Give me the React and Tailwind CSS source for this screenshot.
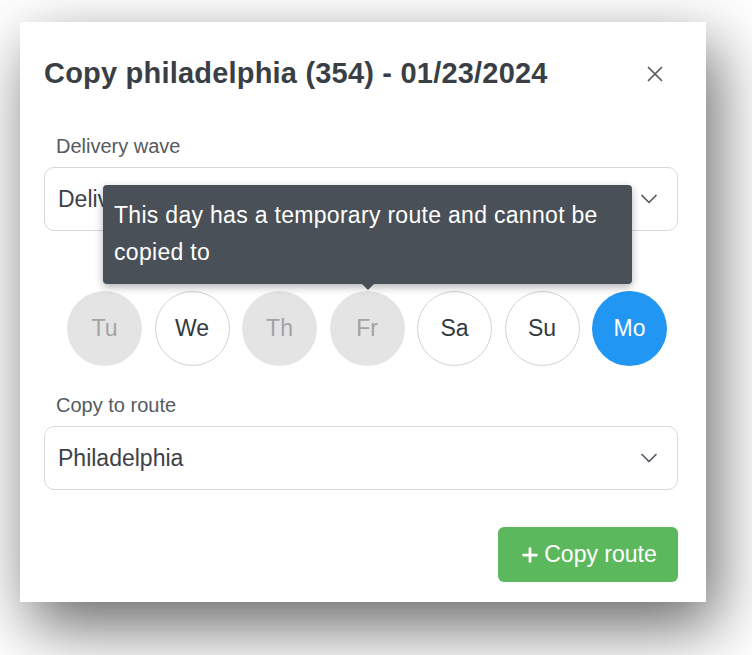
import { X, ChevronDown, Plus } from "lucide-react";

const days = [
  { label: "Tu", state: "disabled" },
  { label: "We", state: "open" },
  { label: "Th", state: "disabled" },
  { label: "Fr", state: "disabled" },
  { label: "Sa", state: "open" },
  { label: "Su", state: "open" },
  { label: "Mo", state: "active" },
];

const dayClass = {
  disabled: "bg-[#e4e4e4] text-[#a3a3a3]",
  open: "bg-white border border-[#cfd3d8] text-[#343a40]",
  active: "bg-[#2196f3] text-white",
};

const Select = ({ value }) => (
  <div className="h-[64px] w-full rounded-[10px] border border-[#d5d9de] bg-white flex items-center justify-between pl-[13px] pr-[14px]">
    <span className="text-[23px] text-[#3d4248]">{value}</span>
    <ChevronDown className="w-[28px] h-[28px] text-[#555b62]" strokeWidth={1.5} />
  </div>
);

const App = () => {
  return (
    <div
      className="w-[752px] h-[655px] bg-white pl-[20px] pt-[22px] overflow-hidden"
      style={{ fontFamily: '"Liberation Sans", Arial, sans-serif' }}
    >
      <div className="w-[686px] h-[580px] bg-white shadow-[10px_24px_60px_rgba(0,0,0,0.6)] pl-[24px] pr-[28px] pt-[32px] relative">
        <div className="flex items-center justify-between h-[40px]">
          <h2 className="text-[29px] font-bold tracking-[0.2px] text-[#3a3f45]">
            Copy philadelphia (354) - 01/23/2024
          </h2>
          <X className="w-[26px] h-[26px] text-[#555b62] mr-[10px]" strokeWidth={1.6} />
        </div>

        <div className="mt-[37px]">
          <div className="pl-[12px] text-[20px] leading-[30px] text-[#555b62] mb-[6px]">Delivery wave</div>
          <Select value="Delivery wave 1" />
        </div>

        <div className="mt-[60px] flex gap-[12.5px] pl-[23px]">
          {days.map((d) => (
            <div
              key={d.label}
              className={`w-[75px] h-[75px] rounded-full flex items-center justify-center text-[23px] ${dayClass[d.state]}`}
            >
              {d.label}
            </div>
          ))}
        </div>

        <div className="mt-[24px]">
          <div className="pl-[12px] text-[20px] leading-[30px] text-[#555b62] mb-[6px]">Copy to route</div>
          <Select value="Philadelphia" />
        </div>

        <div className="flex justify-end mt-[37px]">
          <button className="h-[55px] w-[180px] rounded-[6px] bg-[#5cb85c] text-white text-[23px] flex items-center justify-center gap-[3px]">
            <Plus className="w-[22px] h-[22px]" strokeWidth={3} />
            Copy route
          </button>
        </div>

        <div className="absolute left-[83px] top-[163px] w-[529px] h-[99px] rounded-[4px] bg-[#495057] shadow-[0_3px_8px_rgba(0,0,0,0.3)] text-white text-[23px] tracking-[0.3px] leading-[37px] px-[11px] pt-[12px]">
          This day has a temporary route and cannot be
          <br />
          copied to
          <div className="absolute left-[259px] -bottom-[6px] w-0 h-0 border-l-[6px] border-r-[6px] border-t-[6px] border-l-transparent border-r-transparent border-t-[#495057]" />
        </div>
      </div>
    </div>
  );
};

export default App;
